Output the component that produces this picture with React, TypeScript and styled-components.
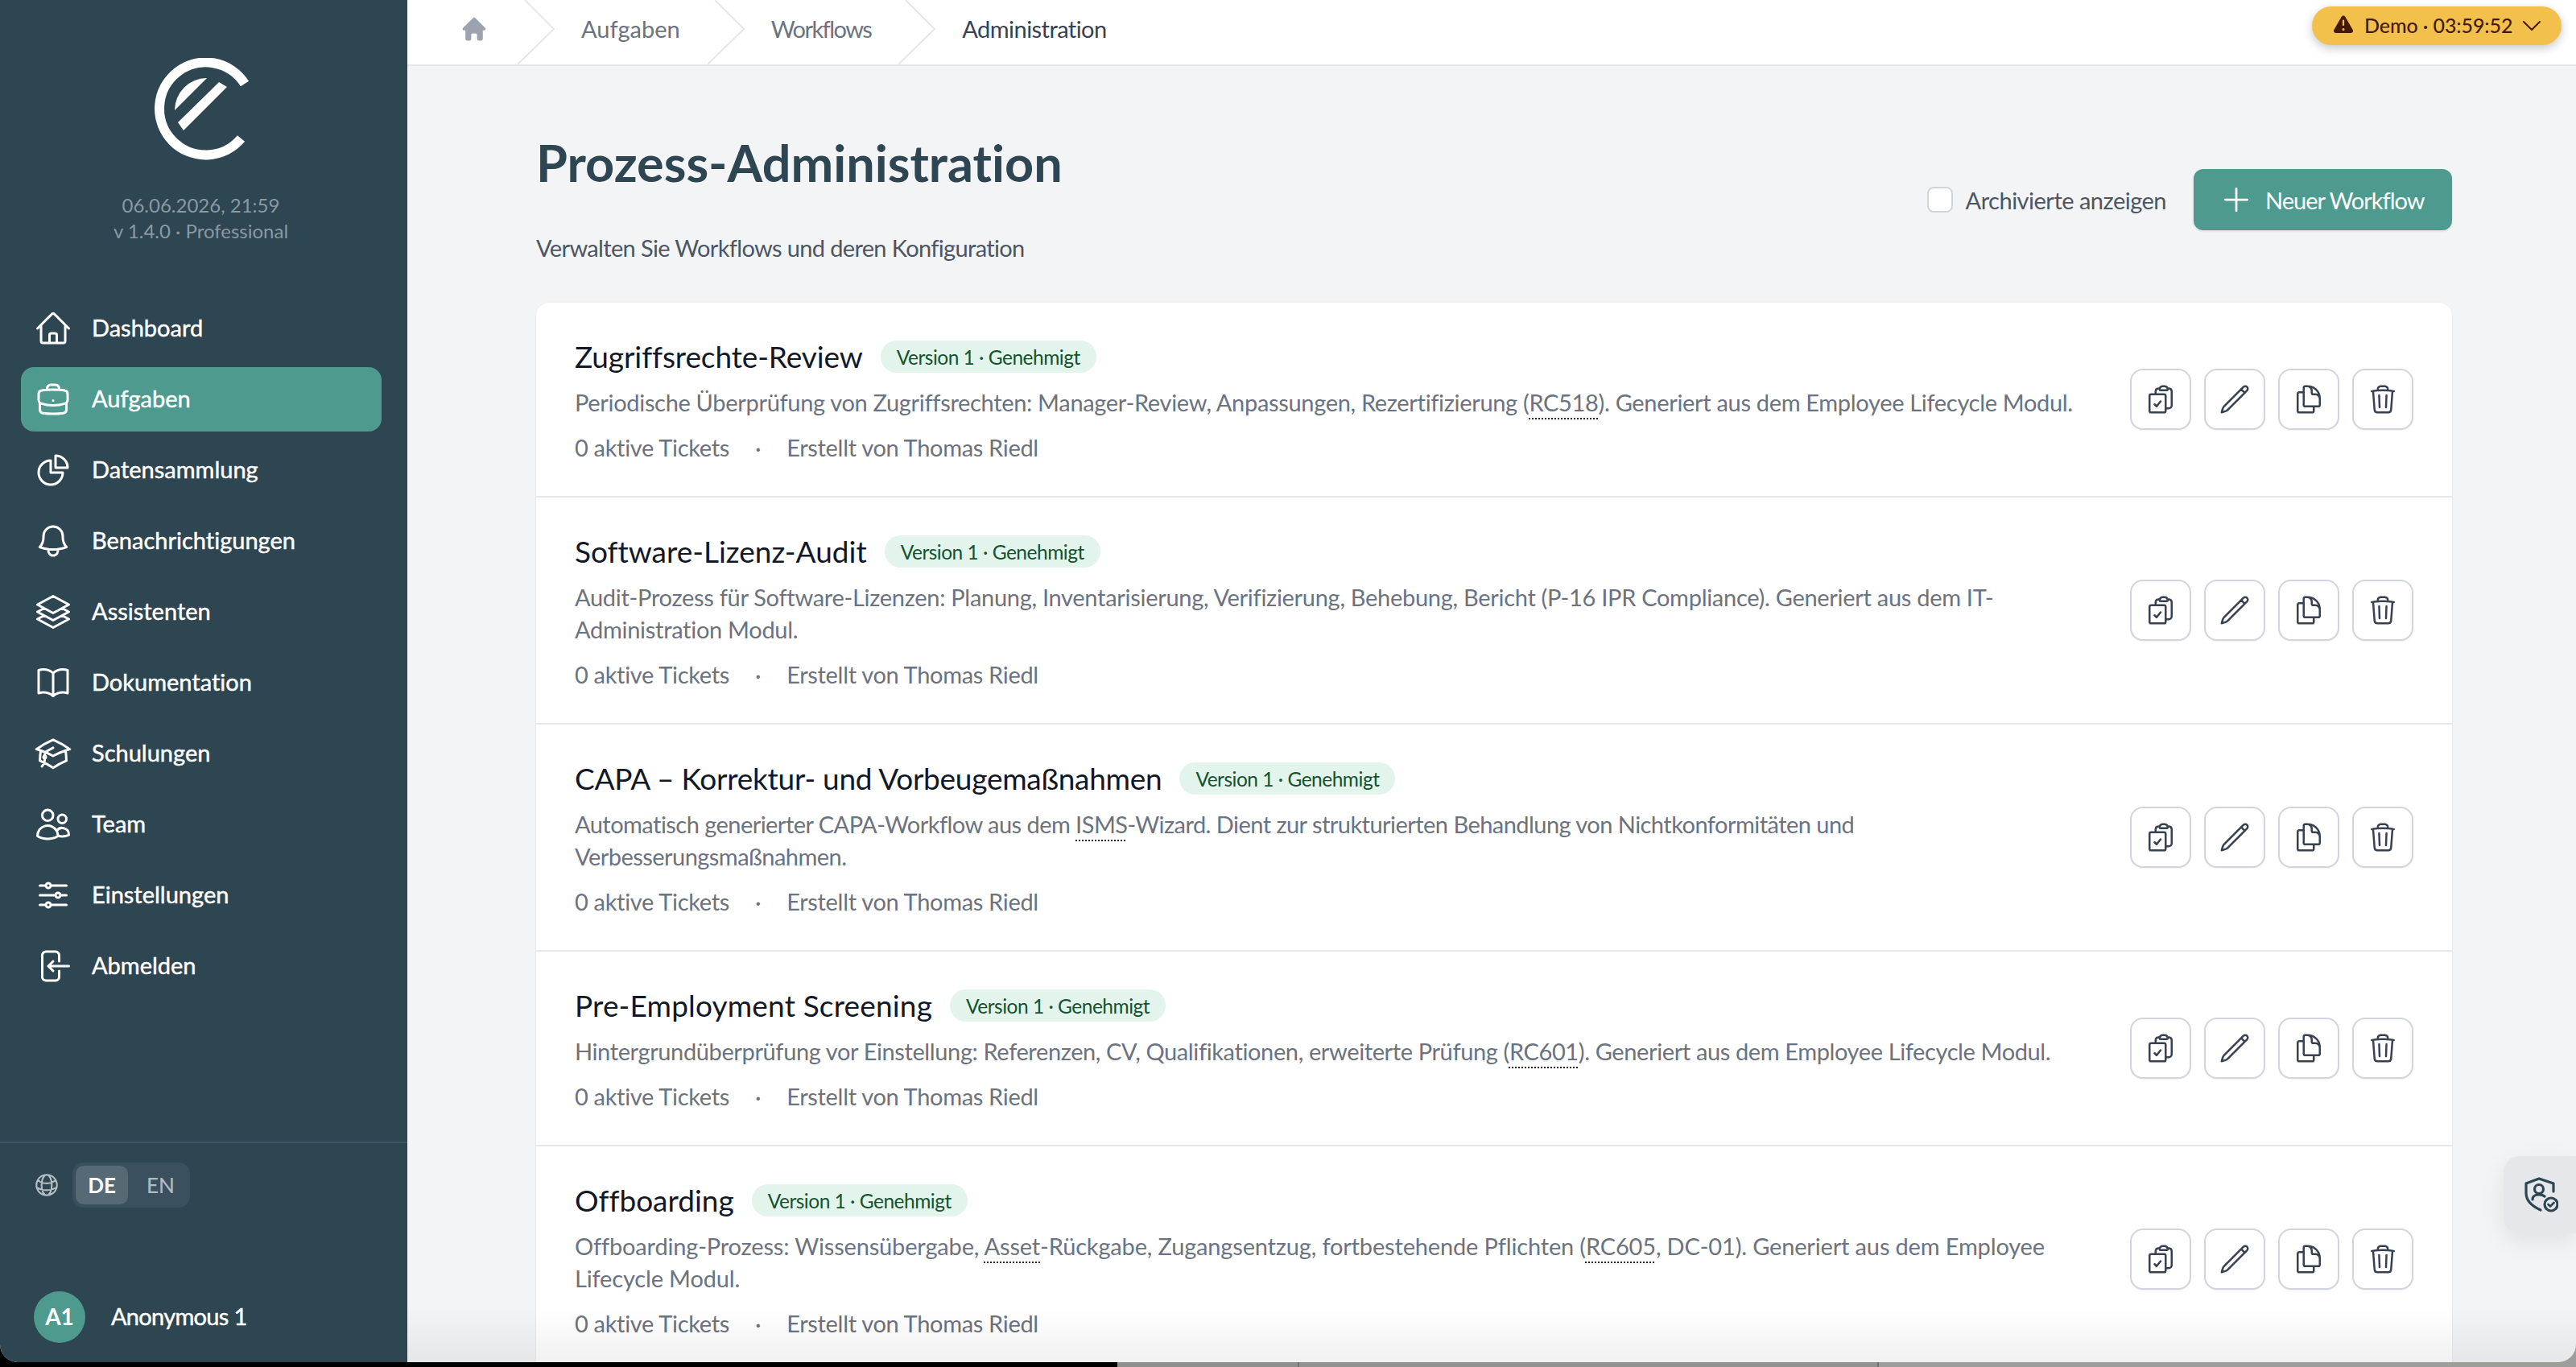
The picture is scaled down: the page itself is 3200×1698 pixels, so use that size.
import React from 'react';
import styled, { createGlobalStyle } from 'styled-components';
import {
  HiOutlineHome, HiOutlineBriefcase, HiOutlineChartPie, HiOutlineBell, HiOutlineSquare3Stack3D,
  HiOutlineBookOpen, HiOutlineAcademicCap, HiOutlineUsers, HiOutlineAdjustmentsHorizontal,
  HiOutlineArrowLeftOnRectangle, HiOutlineGlobeAlt, HiOutlineChevronDown, HiOutlinePlus,
  HiOutlineClipboardDocumentCheck, HiOutlinePencil, HiOutlineDocumentDuplicate, HiOutlineTrash,
  HiMiniHome, HiMiniExclamationTriangle,
} from 'react-icons/hi2';

const Global = createGlobalStyle`
  html, body { margin: 0; padding: 0; background: #000; overflow: hidden; }
  * { box-sizing: border-box; }
  body { font-family: "Lato", "Liberation Sans", sans-serif; font-variant-ligatures: none; }
`;

const Screen = styled.div`
  position: relative;
  width: 3200px;
  height: 1698px;
  overflow: hidden;
  background: linear-gradient(90deg, #000 0 1388px, #8f8f8b 1388px 1612px, #737370 1612px 1614px, #92928e 1614px 2332px, #737370 2332px 2334px, #9d9d99 2334px);
`;
const Window = styled.div`
  position: relative;
  display: flex;
  height: 1692px;
  overflow: hidden;
  border-radius: 0 0 22px 22px;
  background: #f3f4f6;
  &::after {
    content: '';
    position: absolute;
    left: 506px; right: 0; bottom: 0;
    height: 70px;
    pointer-events: none;
    background: linear-gradient(180deg, rgba(0,0,0,0), rgba(0,0,0,.055));
  }
`;
const Sidebar = styled.aside`
  flex: 0 0 506px;
  display: flex;
  flex-direction: column;
  background: #2e4552;
  color: #fff;
`;
const Brand = styled.div`
  display: flex;
  flex-direction: column;
  align-items: center;
  padding-top: 72px;
`;
const Logo = styled.svg`
  width: 128px;
  height: 128px;
  margin-left: 5px;
`;
const BuildInfo = styled.div`
  margin-top: 39px;
  padding-right: 7px;
  font-size: 24px;
  line-height: 32px;
  text-align: center;
  color: #8a9aa3;
`;
const Nav = styled.nav`
  flex: 1;
  display: flex;
  flex-direction: column;
  gap: 8px;
  padding: 65px 32px 0 26px;
`;
const NavItem = styled.div<{ $active?: boolean }>`
  display: flex;
  align-items: center;
  gap: 24px;
  height: 80px;
  padding-left: 16px;
  border-radius: 16px;
  color: #fff;
  background: ${p => (p.$active ? '#4f9a8e' : 'transparent')};
`;
const NavLabel = styled.span`
  margin-bottom: 4px;
  font-size: 29px;
  -webkit-text-stroke: 0.45px #fff;
`;
const SideFooter = styled.div`
  border-top: 2px solid #3f5664;
  padding: 24px 42px 24px;
`;
const LangRow = styled.div`
  display: flex;
  align-items: center;
  gap: 15px;
  margin-left: -1px;
  color: #b4bec4;
`;
const LangToggle = styled.div`
  display: flex;
  align-items: center;
  height: 56px;
  padding: 4px;
  border-radius: 14px;
  background: #3a505e;
`;
const LangButton = styled.div<{ $on?: boolean }>`
  display: flex;
  align-items: center;
  justify-content: center;
  height: 48px;
  width: 65px;
  margin-left: ${p => (p.$on ? 0 : 8)}px;
  border-radius: 10px;
  font-size: 26px;
  font-weight: ${p => (p.$on ? 700 : 500)};
  color: ${p => (p.$on ? '#fff' : '#b0bac0')};
  background: ${p => (p.$on ? '#566a76' : 'transparent')};
`;
const UserRow = styled.div`
  display: flex;
  align-items: center;
  gap: 32px;
  margin-top: 104px;
`;
const Avatar = styled.div`
  display: flex;
  align-items: center;
  justify-content: center;
  width: 64px;
  height: 64px;
  padding-bottom: 3px;
  border-radius: 50%;
  background: #4f9a8e;
  font-size: 28px;
  font-weight: 700;
`;
const UserName = styled.div`
  margin-bottom: 4px;
  font-size: 29px;
  letter-spacing: -0.7px;
  -webkit-text-stroke: 0.45px #fff;
`;
const Content = styled.div`
  flex: 1;
  display: flex;
  flex-direction: column;
  min-width: 0;
`;
const TopBar = styled.header`
  flex: 0 0 82px;
  display: flex;
  align-items: flex-start;
  justify-content: space-between;
  background: #fff;
  border-bottom: 2px solid #e5e7eb;
  padding-right: 18px;
`;
const Crumbs = styled.nav`
  display: flex;
  align-items: center;
  height: 80px;
  padding-left: 65px;
  color: #9ca3af;
`;
const HomeIcon = styled(HiMiniHome)`
  margin-bottom: 9px;
`;
const Crumb = styled.span<{ $current?: boolean; $track?: number }>`
  margin: 0 34px 10px 0;
  font-size: 29px;
  letter-spacing: ${p => p.$track ?? 0}px;
  color: ${p => (p.$current ? '#374151' : '#6b7280')};
`;
const CrumbSep = styled.svg<{ $first?: boolean }>`
  width: 46px;
  height: 80px;
  margin: 0 33px 0 ${p => (p.$first ? 36 : 0)}px;
  flex: none;
`;
const DemoPill = styled.div`
  display: flex;
  align-items: center;
  width: 310px;
  height: 48px;
  margin-top: 8px;
  padding-left: 24px;
  border-radius: 24px;
  background: #f3c14b;
  color: #451a03;
  font-size: 25px;
  font-weight: 500;
  box-shadow: 0 4px 12px rgba(0,0,0,.22);
`;
const DemoText = styled.span`
  margin: 0 8px 3px 11px;
  letter-spacing: -0.1px;
`;
const Page = styled.main`
  flex: 1;
  min-height: 0;
  overflow: hidden;
  padding: 86px 154px 0 160px;
`;
const PageHead = styled.div`
  display: flex;
  align-items: center;
  justify-content: space-between;
  margin-bottom: 48px;
`;
const Title = styled.h1`
  margin: 0;
  font-size: 63px;
  line-height: 68px;
  font-weight: 700;
  color: #2e4552;
`;
const Subtitle = styled.p`
  margin: 52px 0 0;
  font-size: 29px;
  line-height: 40px;
  letter-spacing: -0.65px;
  color: #4b5563;
`;
const HeadActions = styled.div`
  display: flex;
  align-items: center;
  gap: 34px;
`;
const CheckLabel = styled.label`
  display: flex;
  align-items: center;
  gap: 16px;
  font-size: 29px;
  letter-spacing: -0.5px;
  color: #4b5563;
`;
const CheckBox = styled.span`
  width: 32px;
  height: 32px;
  background: #fff;
  border: 2px solid #d1d5db;
  border-radius: 8px;
`;
const PrimaryButton = styled.button`
  display: flex;
  align-items: center;
  gap: 14px;
  width: 321px;
  height: 76px;
  padding: 0 0 0 31px;
  border: 0;
  border-radius: 12px;
  background: #4f9a8e;
  color: #fff;
  font: inherit;
  font-size: 29px;
  letter-spacing: -1px;
  box-shadow: 0 1px 3px rgba(0,0,0,.12);
`;
const Card = styled.section`
  background: #fff;
  border-radius: 16px 16px 0 0;
  box-shadow: 0 1px 3px rgba(0,0,0,.08);
`;
const Row = styled.article`
  display: flex;
  align-items: center;
  justify-content: space-between;
  padding: 44px 48px 40px;
  border-bottom: 2px solid #e5e7eb;
  &:last-child { border-bottom: 0; }
`;
const RowBody = styled.div`
  min-width: 0;
`;
const RowHead = styled.div`
  display: flex;
  align-items: center;
  gap: 24px;
  height: 50px;
`;
const RowTitle = styled.h2<{ $track?: number }>`
  margin: 0 0 4px;
  font-size: 37px;
  line-height: 46px;
  font-weight: 400;
  letter-spacing: ${p => p.$track ?? 0}px;
  color: #111827;
`;
const Badge = styled.span`
  display: flex;
  align-items: center;
  height: 40px;
  margin-bottom: 4px;
  margin-left: -2px;
  padding: 0 20px;
  border-radius: 20px;
  background: #e2f4ec;
  color: #14532d;
  font-size: 24.5px;
  letter-spacing: -0.5px;
`;
const Desc = styled.p<{ $track: number }>`
  margin: 10px 0 0;
  font-size: 29px;
  line-height: 40px;
  letter-spacing: ${p => p.$track}px;
  color: #6b7280;
  white-space: nowrap;
`;
const Abbr = styled.span`
  text-decoration: underline dotted #222;
  text-decoration-thickness: 2px;
  text-underline-offset: 8px;
`;
const Meta = styled.div`
  display: flex;
  gap: 32px;
  margin-top: 16px;
  font-size: 29px;
  line-height: 40px;
  letter-spacing: -0.32px;
  color: #6b7280;
`;
const Actions = styled.div`
  display: flex;
  gap: 16px;
  flex: none;
  margin-bottom: 4px;
`;
const IconButton = styled.button`
  display: flex;
  align-items: center;
  justify-content: center;
  width: 76px;
  height: 76px;
  padding: 0;
  background: #fff;
  border: 2px solid #d1d5db;
  border-radius: 16px;
  color: #374151;
  box-shadow: 0 1px 2px rgba(0,0,0,.06);
`;
const SideTab = styled.div`
  position: absolute;
  right: 0;
  top: 1436px;
  display: flex;
  align-items: center;
  width: 90px;
  height: 96px;
  padding-left: 26px;
  background: #e5e7eb;
  border-radius: 20px 0 0 20px;
  box-shadow: 0 10px 30px rgba(0,0,0,.08);
`;

const navItems = [
  { label: 'Dashboard', Icon: HiOutlineHome },
  { label: 'Aufgaben', Icon: HiOutlineBriefcase, active: true },
  { label: 'Datensammlung', Icon: HiOutlineChartPie },
  { label: 'Benachrichtigungen', Icon: HiOutlineBell },
  { label: 'Assistenten', Icon: HiOutlineSquare3Stack3D },
  { label: 'Dokumentation', Icon: HiOutlineBookOpen },
  { label: 'Schulungen', Icon: HiOutlineAcademicCap },
  { label: 'Team', Icon: HiOutlineUsers },
  { label: 'Einstellungen', Icon: HiOutlineAdjustmentsHorizontal },
  { label: 'Abmelden', Icon: HiOutlineArrowLeftOnRectangle },
];

const workflows: { title: string; titleTrack: number; track: number; desc: React.ReactNode }[] = [
  {
    title: 'Zugriffsrechte-Review',
    titleTrack: -0.1,
    track: -0.32,
    desc: <>Periodische Überprüfung von Zugriffsrechten: Manager-Review, Anpassungen, Rezertifizierung (<Abbr>RC518</Abbr>). Generiert aus dem Employee Lifecycle Modul.</>,
  },
  {
    title: 'Software-Lizenz-Audit',
    titleTrack: 0,
    track: -0.29,
    desc: <>Audit-Prozess für Software-Lizenzen: Planung, Inventarisierung, Verifizierung, Behebung, Bericht (P-16 IPR Compliance). Generiert aus dem IT-<br />Administration Modul.</>,
  },
  {
    title: 'CAPA – Korrektur- und Vorbeugemaßnahmen',
    titleTrack: -0.26,
    track: -0.54,
    desc: <>Automatisch generierter CAPA-Workflow aus dem <Abbr>ISMS</Abbr>-Wizard. Dient zur strukturierten Behandlung von Nichtkonformitäten und<br />Verbesserungsmaßnahmen.</>,
  },
  {
    title: 'Pre-Employment Screening',
    titleTrack: 0.17,
    track: -0.38,
    desc: <>Hintergrundüberprüfung vor Einstellung: Referenzen, CV, Qualifikationen, erweiterte Prüfung (<Abbr>RC601</Abbr>). Generiert aus dem Employee Lifecycle Modul.</>,
  },
  {
    title: 'Offboarding',
    titleTrack: 0,
    track: -0.16,
    desc: <>Offboarding-Prozess: Wissensübergabe, <Abbr>Asset</Abbr>-Rückgabe, Zugangsentzug, fortbestehende Pflichten (<Abbr>RC605</Abbr>, DC-01). Generiert aus dem Employee<br />Lifecycle Modul.</>,
  },
];

const Separator = ({ first }: { first?: boolean }) => (
  <CrumbSep $first={first} viewBox="0 0 46 80" fill="none">
    <path d="M9 0 L45 36 L0 80" stroke="#e5e7eb" strokeWidth="2" />
  </CrumbSep>
);

export default function App() {
  return (
    <Screen>
      <Global />
      <Window>
        <Sidebar>
          <Brand>
            <Logo viewBox="0 0 128 128" fill="none">
              <path d="M112 32 A57.5 57.5 0 1 0 107.5 100" stroke="#fff" strokeWidth="12" />
              <path d="M80 30 L90 36 L36 90 L29 80 Z" fill="#fff" />
              <path d="M65 25 A40 40 0 0 0 25 65 Z" fill="#fff" />
            </Logo>
            <BuildInfo>06.06.2026, 21:59<br />v 1.4.0 · Professional</BuildInfo>
          </Brand>
          <Nav>
            {navItems.map(({ label, Icon, active }) => (
              <NavItem key={label} $active={active}>
                <Icon size={48} />
                <NavLabel>{label}</NavLabel>
              </NavItem>
            ))}
          </Nav>
          <SideFooter>
            <LangRow>
              <HiOutlineGlobeAlt size={34} />
              <LangToggle>
                <LangButton $on>DE</LangButton>
                <LangButton>EN</LangButton>
              </LangToggle>
            </LangRow>
            <UserRow>
              <Avatar>A1</Avatar>
              <UserName>Anonymous 1</UserName>
            </UserRow>
          </SideFooter>
        </Sidebar>
        <Content>
          <TopBar>
            <Crumbs>
              <HomeIcon size={36} />
              <Separator first />
              <Crumb>Aufgaben</Crumb>
              <Separator />
              <Crumb $track={-1.55}>Workflows</Crumb>
              <Separator />
              <Crumb $current $track={-0.55}>Administration</Crumb>
            </Crumbs>
            <DemoPill>
              <HiMiniExclamationTriangle size={30} />
              <DemoText>Demo · 03:59:52</DemoText>
              <HiOutlineChevronDown size={32} />
            </DemoPill>
          </TopBar>
          <Page>
            <PageHead>
              <div>
                <Title>Prozess-Administration</Title>
                <Subtitle>Verwalten Sie Workflows und deren Konfiguration</Subtitle>
              </div>
              <HeadActions>
                <CheckLabel><CheckBox />Archivierte anzeigen</CheckLabel>
                <PrimaryButton><HiOutlinePlus size={44} />Neuer Workflow</PrimaryButton>
              </HeadActions>
            </PageHead>
            <Card>
              {workflows.map(w => (
                <Row key={w.title}>
                  <RowBody>
                    <RowHead>
                      <RowTitle $track={w.titleTrack}>{w.title}</RowTitle>
                      <Badge>Version 1 · Genehmigt</Badge>
                    </RowHead>
                    <Desc $track={w.track}>{w.desc}</Desc>
                    <Meta>
                      <span>0 aktive Tickets</span>
                      <span>·</span>
                      <span>Erstellt von Thomas Riedl</span>
                    </Meta>
                  </RowBody>
                  <Actions>
                    <IconButton><HiOutlineClipboardDocumentCheck size={40} /></IconButton>
                    <IconButton><HiOutlinePencil size={40} /></IconButton>
                    <IconButton><HiOutlineDocumentDuplicate size={40} /></IconButton>
                    <IconButton><HiOutlineTrash size={40} /></IconButton>
                  </Actions>
                </Row>
              ))}
            </Card>
          </Page>
        </Content>
        <SideTab>
          <svg width="42" height="44" viewBox="0 0 42 44" fill="none" stroke="#2e4552" strokeWidth="3.2" strokeLinecap="round" strokeLinejoin="round">
            <path d="M36 18 V8 L18 2 L2 8 V20 C2 29 9 36 20 41" />
            <circle cx="18" cy="15" r="5.5" />
            <path d="M10 28 C10 23 14 22 18 22 C21 22 23 22 25 24" />
            <circle cx="33" cy="34" r="8" />
            <path d="M29.5 34 l2.5 2.5 l4.5 -4.5" strokeWidth="2.6" />
          </svg>
        </SideTab>
      </Window>
    </Screen>
  );
}
